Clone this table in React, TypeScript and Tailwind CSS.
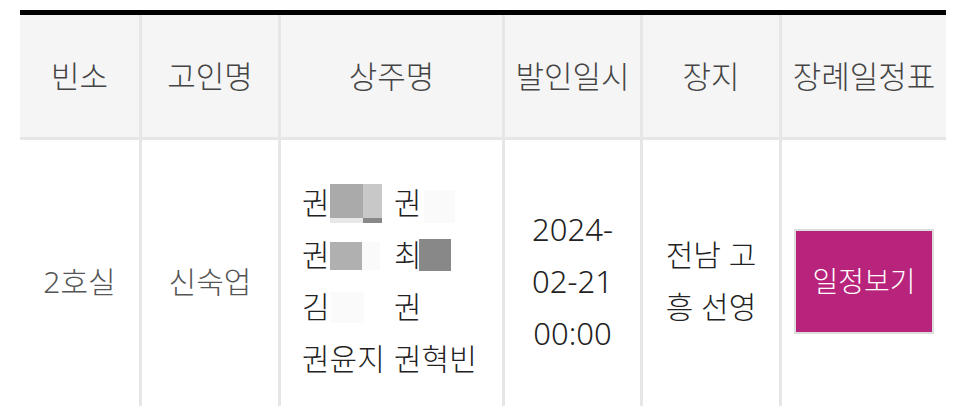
const font = { fontFamily: '"Noto Sans", "Noto Sans CJK KR", sans-serif' };

const cols = ['빈소', '고인명', '상주명', '발인일시', '장지', '장례일정표'];
const widths = ['w-[119px]', 'w-[139px]', 'w-[224px]', 'w-[138px]', 'w-[139px]', 'w-[167px]'];

function Names() {
  return (
    <div className="flex flex-col pl-[21px] text-[30px] leading-[52px] text-[#222]">
      <div className="flex items-center">
        <span className="flex w-[92px] items-center">
          권
          <span className="flex flex-col">
            <span className="flex">
              <span className="h-[34px] w-[33px] bg-[#aaaaaa]" />
              <span className="h-[34px] w-[19px] bg-[#c8c8c8]" />
            </span>
            <span className="flex">
              <span className="h-[5px] w-[33px] bg-[#e8e8e8]" />
              <span className="h-[5px] w-[19px] bg-[#888888]" />
            </span>
          </span>
        </span>
        <span className="flex items-center">
          권<span className="ml-[2px] mt-[6px] h-[33px] w-[31px] bg-[#fafafa]" />
        </span>
      </div>
      <div className="flex items-center">
        <span className="flex w-[92px] items-center">
          권
          <span className="mt-[2px] h-[28px] w-[32px] bg-[#b0b0b0]" />
          <span className="mt-[2px] h-[28px] w-[18px] bg-[#fafafa]" />
        </span>
        <span className="flex items-center">
          최<span className="-ml-[3px] h-[32px] w-[32px] bg-[#888888]" />
        </span>
      </div>
      <div className="flex items-center">
        <span className="flex w-[92px] items-center">
          김<span className="ml-[1px] h-[31px] w-[33px] bg-[#fafafa]" />
        </span>
        <span>권</span>
      </div>
      <div className="flex items-center">
        <span className="w-[92px]">권윤지</span>
        <span>권혁빈</span>
      </div>
    </div>
  );
}

export default function App() {
  return (
    <div className="min-h-[406px] overflow-hidden bg-white pt-[10px] font-light" style={font}>
      <div className="mx-[20px] border-t-[5px] border-black">
        <div className="flex h-[125px] border-b-[3px] border-[#e6e6e6] bg-[#f5f5f5] text-[31px] text-[#444]">
          {cols.map((c, i) => (
            <div
              key={c}
              className={`flex items-center justify-center ${widths[i]} ${i > 0 ? 'border-l-[3px] border-[#e6e6e6]' : ''}`}
            >
              {c}
            </div>
          ))}
        </div>
        <div className="flex text-[30px]">
          <div className="flex w-[119px] items-center justify-center text-[#555]">2호실</div>
          <div className="flex w-[139px] items-center justify-center border-l-[3px] border-[#e6e6e6] text-[#555]">
            신숙업
          </div>
          <div className="w-[224px] border-l-[3px] border-[#e6e6e6] py-[37px]">
            <Names />
          </div>
          <div className="flex w-[138px] items-center justify-center border-l-[3px] border-[#e6e6e6] text-center text-[31px] leading-[52px] text-[#222]">
            <div>
              2024-
              <br />
              02-21
              <br />
              00:00
            </div>
          </div>
          <div className="flex w-[139px] items-center justify-center border-l-[3px] border-[#e6e6e6] text-center leading-[52px] text-[#222]">
            <div>
              전남 고
              <br />흥 선영
            </div>
          </div>
          <div className="flex w-[167px] items-center justify-center border-l-[3px] border-[#e6e6e6]">
            <button className="flex h-[105px] w-[140px] items-center justify-center border-2 border-[#dddddd] bg-[#b8237b] text-[28px] text-white">
              일정보기
            </button>
          </div>
        </div>
      </div>
    </div>
  );
}
